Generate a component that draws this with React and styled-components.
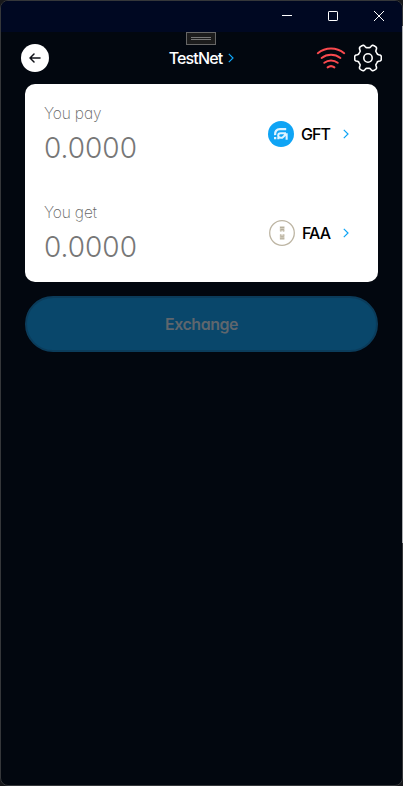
import React from 'react';
import styled, { createGlobalStyle } from 'styled-components';

const GlobalStyle = createGlobalStyle`
  * { box-sizing: border-box; }
  body { margin: 0; background: #17181b; font-family: Inter, sans-serif; font-feature-settings: "cv11"; overflow: hidden; }
  svg { display: block; }
`;

const Window = styled.main`
  width: 403px;
  height: 786px;
  border: 1px solid #35373a;
  border-radius: 8px;
  background: #02070f;
  overflow: hidden;
`;

const EdgeHighlight = styled.div`
  position: absolute;
  right: 0;
  top: 26px;
  width: 1px;
  height: 517px;
  background: #a9abae;
`;

const Backdrop = styled.div`
  position: relative;
  width: 403px;
  height: 786px;
`;

const TitleBar = styled.div`
  height: 31px;
  background: #000822;
  display: flex;
  justify-content: flex-end;
`;

const WindowButton = styled.button`
  width: 46px;
  height: 30px;
  padding: 0;
  border: 0;
  background: none;
  display: grid;
  place-items: center;
`;

const Header = styled.header`
  position: relative;
  height: 52px;
  padding: 0 20px;
  display: grid;
  grid-template-columns: 1fr auto 1fr;
  align-items: center;
`;

const DebugHandle = styled.div`
  position: absolute;
  left: 185px;
  top: 0;
  width: 30px;
  height: 13px;
  border: 1px solid #666;
  background: #1c1c1c;
  display: flex;
  flex-direction: column;
  align-items: center;
  justify-content: center;
  gap: 1px;
`;

const HandleLine = styled.span`
  width: 20px;
  height: 1px;
  background: #777;
`;

const BackButton = styled.button`
  width: 28px;
  height: 28px;
  padding: 0;
  border: 0;
  border-radius: 50%;
  background: #fff;
  display: grid;
  place-items: center;
`;

const Network = styled.button`
  display: flex;
  align-items: center;
  gap: 6px;
  padding: 0 0 1px;
  border: 0;
  background: none;
  color: #fff;
  font: 500 16px/20px Inter, sans-serif;
  letter-spacing: -0.85px;
`;

const Actions = styled.div`
  display: flex;
  justify-content: flex-end;
  align-items: center;
  gap: 8px;
`;

const Card = styled.section`
  margin: 0 24px;
  height: 198px;
  border-radius: 10px;
  background: #fff;
  display: grid;
  grid-template-rows: 99px 99px;
`;

const Row = styled.div`
  display: flex;
  justify-content: space-between;
  padding: 0 29px 0 19px;
`;

const Amount = styled.div`
  padding-top: 20px;
`;

const Label = styled.div`
  font-size: 15.5px;
  line-height: 20px;
  font-weight: 200;
  letter-spacing: -0.15px;
  color: #666;
`;

const Value = styled.div`
  margin-top: 7px;
  font-size: 28px;
  line-height: 34px;
  font-weight: 300;
  letter-spacing: 0;
  color: #777;
`;

const Token = styled.button`
  width: ${(p) => p.$width};
  height: 28px;
  margin-top: 36px;
  padding: 0;
  border: 0;
  background: none;
  display: flex;
  align-items: center;
  color: #000;
`;

const TokenName = styled.span`
  flex: 1;
  margin-left: 7px;
  text-align: left;
  font: 500 16px/20px Inter, sans-serif;
  letter-spacing: -0.95px;
`;

const ExchangeButton = styled.button`
  display: block;
  width: 353px;
  height: 56px;
  margin: 14px 24px 0;
  padding: 0;
  border: 2px solid #0b3c5b;
  border-radius: 28px;
  background: #09476b;
  color: #5f666d;
  font: 600 16px/20px Inter, sans-serif;
  font-feature-settings: "cv11";
  letter-spacing: -0.45px;
`;

const Chevron = () => (
  <svg width="6" height="10" viewBox="0 0 6 10" fill="none" stroke="#0fa4f5" strokeWidth="1.2">
    <path d="M.8.8 5 5 .8 9.2" />
  </svg>
);

const BackArrow = () => (
  <svg width="12" height="10" viewBox="0 0 12 10" fill="none" stroke="#111319" strokeWidth="1.5" strokeLinecap="round" strokeLinejoin="round">
    <path d="M11 5H1M5 1 1 5l4 4" />
  </svg>
);

const Signal = () => (
  <svg width="30" height="28" viewBox="0 0 30 28" fill="none" stroke="#f9494e" strokeWidth="2" strokeLinecap="round">
    <path d="M1.8 9.2C9.5 2.9 20.5 2.9 28.2 9.2M5.6 14c5.5-4.3 13.3-4.3 18.8 0M8.3 18.8c3.9-3.1 9.5-3.1 13.4 0M11.6 23.4c2-1.5 4.8-1.5 6.8 0" />
  </svg>
);

const gearPath = Array.from({ length: 180 }, (_, i) => {
  const angle = (i * Math.PI) / 90;
  const radius = 11.7 + 1.7 * Math.tanh(2.4 * Math.cos(6 * angle));
  const x = 14 + radius * Math.cos(angle);
  const y = 14 + radius * 1.03 * Math.sin(angle);
  return `${i ? 'L' : 'M'}${x.toFixed(2)} ${y.toFixed(2)}`;
}).join('') + 'Z';

const Gear = () => (
  <svg width="28" height="28" viewBox="0 0 28 28" fill="none" stroke="#fff" strokeWidth="1.6" strokeLinejoin="round">
    <path d={gearPath} />
    <circle cx="14" cy="14" r="4.2" />
  </svg>
);

const GftIcon = () => (
  <svg width="26" height="26" viewBox="0 0 26 26" fill="none">
    <circle cx="13" cy="13" r="13" fill="#0fa4f5" />
    <path d="M7.1 14.2C6.8 10.3 8.5 8.2 12 8.2h6.2" stroke="#e0f3ff" strokeWidth="2.3" />
    <path d="M18 12.2h-5.2c-1.7 0-2.6 1-2.6 2.3 0 1.6 1.1 2.3 2.7 2.3h1.4l4-3.7" stroke="#e0f3ff" strokeWidth="2" />
    <path d="M14.7 12.3h5v6.4h-2.1v-3.8z" fill="#e0f3ff" />
    <path d="M6 16h2.3v2.2H6zm3.3.2h2.1v2H9.3z" fill="#e0f3ff" />
  </svg>
);

const FaaIcon = () => (
  <svg width="26" height="26" viewBox="0 0 26 26">
    <circle cx="13" cy="13" r="12.3" fill="#fff" stroke="#bdb5a3" strokeWidth="1.3" />
    <path d="M10.8 6.3h4.7v5h-4.7zm0 8.2h4.7v5h-4.7z" fill="#d4cebf" />
    <path d="M11 7h4.2v1H11zm.5 2h3.4v1h-3.4zm-.3 1.5h1.2v1h-1.2zm2.8 0h1.3v1H14zm-3 4h1.2v1H11zm3.1 0h1.2v1h-1.2zm-2.7 1.8h3.4v1h-3.4zm-.4 2h4.2v1H11z" fill="#b5ae9c" />
  </svg>
);

function TradeRow({ label, name, icon, tokenWidth }) {
  return (
    <Row>
      <Amount>
        <Label>{label}</Label>
        <Value>0.0000</Value>
      </Amount>
      <Token $width={tokenWidth}>
        {icon}
        <TokenName>{name}</TokenName>
        <Chevron />
      </Token>
    </Row>
  );
}

export default function App() {
  return (
    <Backdrop>
      <GlobalStyle />
      <Window>
        <TitleBar>
          <WindowButton aria-label="Minimize">
            <svg width="10" height="10"><path d="M0 4.5h10" stroke="#fff" /></svg>
          </WindowButton>
          <WindowButton aria-label="Maximize">
            <svg width="10" height="10"><rect x=".5" y=".5" width="9" height="9" rx=".6" fill="none" stroke="#fff" /></svg>
          </WindowButton>
          <WindowButton aria-label="Close">
            <svg width="10" height="10"><path d="m0 0 10 10M10 0 0 10" stroke="#fff" /></svg>
          </WindowButton>
        </TitleBar>
        <Header>
          <DebugHandle><HandleLine /><HandleLine /></DebugHandle>
          <BackButton aria-label="Back"><BackArrow /></BackButton>
          <Network>TestNet <Chevron /></Network>
          <Actions><Signal /><Gear /></Actions>
        </Header>
        <Card>
          <TradeRow label="You pay" name="GFT" icon={<GftIcon />} tokenWidth="81px" />
          <TradeRow label="You get" name="FAA" icon={<FaaIcon />} tokenWidth="80px" />
        </Card>
        <ExchangeButton>Exchange</ExchangeButton>
      </Window>
      <EdgeHighlight />
    </Backdrop>
  );
}
